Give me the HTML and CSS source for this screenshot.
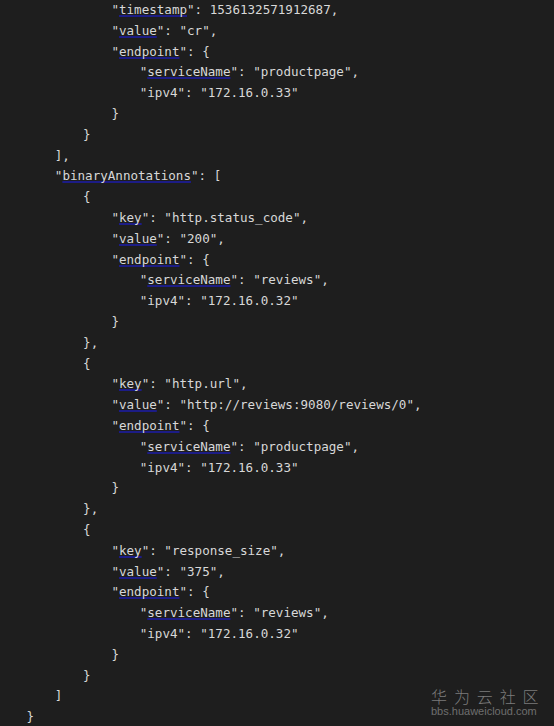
FILE: index.html
```html
<!DOCTYPE html>
<html lang="zh-CN">
<head>
<meta charset="utf-8">
<title>JSON</title>
<link rel="stylesheet" href="styles.css">
</head>
<body>
<div class="editor">
  <div class="code">
    <div class="ln i4">"<span class="k">timestamp</span>": 1536132571912687,</div>
    <div class="ln i4">"<span class="k">value</span>": "cr",</div>
    <div class="ln i4">"<span class="k">endpoint</span>": {</div>
    <div class="ln i5">"<span class="k">serviceName</span>": "productpage",</div>
    <div class="ln i5">"ipv4": "172.16.0.33"</div>
    <div class="ln i4">}</div>
    <div class="ln i3">}</div>
    <div class="ln i2">],</div>
    <div class="ln i2">"<span class="k">binaryAnnotations</span>": [</div>
    <div class="ln i3">{</div>
    <div class="ln i4">"<span class="k">key</span>": "http.status_code",</div>
    <div class="ln i4">"<span class="k">value</span>": "200",</div>
    <div class="ln i4">"<span class="k">endpoint</span>": {</div>
    <div class="ln i5">"<span class="k">serviceName</span>": "reviews",</div>
    <div class="ln i5">"ipv4": "172.16.0.32"</div>
    <div class="ln i4">}</div>
    <div class="ln i3">},</div>
    <div class="ln i3">{</div>
    <div class="ln i4">"<span class="k">key</span>": "http.url",</div>
    <div class="ln i4">"<span class="k">value</span>": "http://reviews:9080/reviews/0",</div>
    <div class="ln i4">"<span class="k">endpoint</span>": {</div>
    <div class="ln i5">"<span class="k">serviceName</span>": "productpage",</div>
    <div class="ln i5">"ipv4": "172.16.0.33"</div>
    <div class="ln i4">}</div>
    <div class="ln i3">},</div>
    <div class="ln i3">{</div>
    <div class="ln i4">"<span class="k">key</span>": "response_size",</div>
    <div class="ln i4">"<span class="k">value</span>": "375",</div>
    <div class="ln i4">"<span class="k">endpoint</span>": {</div>
    <div class="ln i5">"<span class="k">serviceName</span>": "reviews",</div>
    <div class="ln i5">"ipv4": "172.16.0.32"</div>
    <div class="ln i4">}</div>
    <div class="ln i3">}</div>
    <div class="ln i2">]</div>
    <div class="ln i1">}</div>
  </div>
  <div class="watermark">
    <div class="wm-cn">华为云社区</div>
    <div class="wm-url">bbs.huaweicloud.com</div>
  </div>
</div>
</body>
</html>
```
FILE: styles.css
```css
html, body {
  margin: 0;
  padding: 0;
  background: #1e1e1e;
}

.editor {
  position: relative;
  width: 554px;
  height: 726px;
  overflow: hidden;
  background: #1e1e1e;
}

.code {
  font-family: "DejaVu Sans Mono", "Liberation Mono", monospace;
  font-size: 12.57px;
  line-height: 20.8px;
  color: #d8d8d8;
}

.ln {
  height: 20.8px;
  white-space: pre;
}
.i1 { padding-left: 26.5px; }
.i2 { padding-left: 54.8px; }
.i3 { padding-left: 83.1px; }
.i4 { padding-left: 111.4px; }
.i5 { padding-left: 139.7px; }

.k {
  text-decoration: underline;
  text-decoration-color: #1c1c86;
  text-decoration-thickness: 2px;
  text-underline-offset: 1px;
  text-decoration-skip-ink: none;
}

.watermark {
  position: absolute;
  left: 431px;
  top: 688px;
  display: flex;
  flex-direction: column;
  gap: 2px;
}

.wm-cn {
  font-family: "Noto Sans CJK SC", sans-serif;
  font-size: 16px;
  line-height: 16px;
  letter-spacing: 6.9px;
  color: #7c7c7c;
  font-weight: 300;
}

.wm-url {
  font-family: "Liberation Sans", Arial, sans-serif;
  font-size: 11px;
  line-height: 11px;
  color: #6e6e6e;
}
```
